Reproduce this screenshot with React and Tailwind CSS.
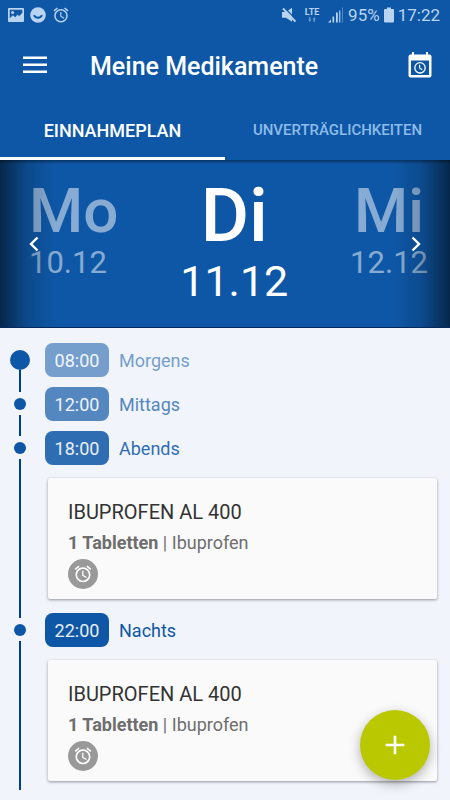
import React, { useState } from 'react';
import { MdAlarm, MdAdd } from 'react-icons/md';
import clsx from 'clsx';

const TABS = ['Einnahmeplan', 'Unverträglichkeiten'];

const IBUPROFEN = {
  name: 'IBUPROFEN AL 400',
  amount: '1 Tabletten',
  substance: 'Ibuprofen'
};

const SCHEDULE = [
  { time: '08:00', label: 'Morgens', badge: 'bg-[#759ecc]', text: 'text-[#759ecc]', meds: [] },
  { time: '12:00', label: 'Mittags', badge: 'bg-[#5487c0]', text: 'text-[#5487c0]', meds: [] },
  { time: '18:00', label: 'Abends', badge: 'bg-[#2f6db3]', text: 'text-[#2f6db3]', meds: [IBUPROFEN] },
  { time: '22:00', label: 'Nachts', badge: 'bg-[#0e56a6]', text: 'text-[#0e56a6]', meds: [IBUPROFEN] }
];

const PictureIcon = () => (
  <svg viewBox="0 0 16 14" className="w-4 h-3.5" fill="currentColor">
    <path
      fillRule="evenodd"
      d="M1 0h14a1 1 0 0 1 1 1v12a1 1 0 0 1-1 1H1a1 1 0 0 1-1-1V1a1 1 0 0 1 1-1zm.7 1.7v8.6l3.2-3 2.4 1.9 2.2-2.6 1.6 1.6 3.2-3.4V1.7z"
    />
    <circle cx="4.6" cy="4.6" r="1.5" />
  </svg>
);

const SmileIcon = () => (
  <svg viewBox="0 0 16 16" className="w-4 h-4">
    <circle cx="8" cy="8" r="7.8" fill="currentColor" />
    <path d="M4 8.2a4.2 3.6 0 0 0 8 0" fill="none" stroke="#0e57a6" strokeWidth="1.9" />
  </svg>
);

const MuteIcon = () => (
  <svg viewBox="0 0 14 15" className="w-3.5 h-4" fill="currentColor">
    <path d="M0 4.6h4L10 .3v14L4 10.2H0z" />
    <path d="M2.6.2l12 12.6" stroke="#0e57a6" strokeWidth="1.3" />
    <path d="M1 1l12.4 13" stroke="currentColor" strokeWidth="1.9" />
  </svg>
);

const SignalIcon = () => (
  <svg viewBox="0 0 16 15" className="w-4 h-4" fill="currentColor">
    <path d="M0 15l3-3v3z" />
    <rect x="4.5" y="9" width="1.6" height="6" />
    <rect x="8" y="5" width="1.8" height="10" />
    <rect x="11" y="3" width="1.4" height="12" opacity=".8" />
    <rect x="14" y="0" width="1" height="15" opacity=".4" />
  </svg>
);

const BatteryIcon = () => (
  <svg viewBox="0 0 10 15" className="w-2.5 h-4" fill="currentColor">
    <path d="M3 0h4v1.5h2a1 1 0 0 1 1 1V14a1 1 0 0 1-1 1H1a1 1 0 0 1-1-1V2.5a1 1 0 0 1 1-1h2z" />
  </svg>
);

const MenuIcon = () => (
  <svg viewBox="0 0 24 18" className="w-6 h-[18px]" fill="currentColor">
    <path d="M0 .5h24V3H0zM0 7.5h24V10H0zM0 14.5h24V17H0z" />
  </svg>
);

const CalendarClockIcon = () => (
  <svg viewBox="0 0 24 26" className="w-6 h-[26px]">
    <path
      fill="currentColor"
      fillRule="evenodd"
      d="M4 0h2v2.5h12V0h2v2.5h1.5A2 2 0 0 1 23.5 4.5v19a2 2 0 0 1-2 2h-19a2 2 0 0 1-2-2v-19a2 2 0 0 1 2-2H4zM3 8.5v14.5h18V8.5z"
    />
    <circle cx="12" cy="15.8" r="5.2" fill="none" stroke="currentColor" strokeWidth="1.3" />
    <path d="M11.6 12.8v3.2l2.6 1.8" fill="none" stroke="currentColor" strokeWidth="1.2" />
  </svg>
);

const StatusBar = () => (
  <div className="flex items-center justify-between h-[30px] pl-2 pr-2.5 text-[#b9d4f1]">
    <div className="flex items-center gap-1.5">
      <PictureIcon />
      <SmileIcon />
      <MdAlarm className="w-[18px] h-[18px]" />
    </div>
    <div className="flex items-center gap-1">
      <MuteIcon />
      <div className="flex flex-col items-center w-6">
        <span className="text-[9px] leading-[9px] font-bold">LTE</span>
        <svg viewBox="0 0 8 5" className="w-2 h-[5px] opacity-50" fill="currentColor">
          <path d="M0 2.5h1V0h1.5v2.5h1L1.8 5zM4.5 2.5L6.2 0 8 2.5H7V5H5.5V2.5z" />
        </svg>
      </div>
      <SignalIcon />
      <span className="text-[17px] leading-5">95%</span>
      <BatteryIcon />
      <span className="text-[17px] leading-5">17:22</span>
    </div>
  </div>
);

const DayColumn = ({ day, date, active = false }) => (
  <div
    className={clsx(
      'flex flex-col items-center',
      active ? 'text-white' : 'text-white/50 first:items-start'
    )}
  >
    <span className={clsx('font-medium', active ? 'text-[74px] leading-[76px]' : 'text-[62px] leading-[66px]')}>
      {day}
    </span>
    <span className={active ? 'text-[43px] leading-[54px]' : 'text-[31px] leading-[38px]'}>{date}</span>
  </div>
);

const DayPicker = () => (
  <section className="relative h-[168px] bg-[#0e57a6] border-b border-[#062a5e]">
    <div className="flex items-start justify-between pt-[18px] pl-[29px] pr-[22px]">
      <DayColumn day="Mo" date="10.12" />
      <DayColumn day="Di" date="11.12" active />
      <DayColumn day="Mi" date="12.12" />
    </div>

    {/* Edge shading */}
    <div className="absolute inset-y-0 left-0 w-14 bg-linear-to-r from-black/55 via-black/15 to-transparent" />
    <div className="absolute inset-y-0 right-0 w-14 bg-linear-to-l from-black/55 via-black/15 to-transparent" />
    <div className="absolute inset-x-0 top-0 h-1 bg-linear-to-b from-black/40 to-transparent" />

    <button aria-label="Vorheriger Tag" className="absolute inset-y-0 left-6 w-5 flex items-center justify-center text-white">
      <svg viewBox="0 0 10 16" className="w-2.5 h-4" fill="none" stroke="currentColor" strokeWidth="2.4">
        <path d="M8.5 1.5L2 8l6.5 6.5" />
      </svg>
    </button>
    <button aria-label="Nächster Tag" className="absolute inset-y-0 right-6 w-5 flex items-center justify-center text-white">
      <svg viewBox="0 0 10 16" className="w-2.5 h-4" fill="none" stroke="currentColor" strokeWidth="2.4">
        <path d="M1.5 1.5L8 8l-6.5 6.5" />
      </svg>
    </button>
  </section>
);

const Rail = ({ first }) => (
  <div className="w-10 shrink-0 flex flex-col items-center">
    {first ? (
      <span className="w-5 h-5 mt-3 rounded-full bg-[#0e56a6]" />
    ) : (
      <>
        <span className="w-0.5 h-2.5 bg-[#003f88]" />
        <span className="w-3 h-3 mt-1.5 mb-[5px] rounded-full bg-[#0e56a6]" />
      </>
    )}
    <span className="w-0.5 flex-1 bg-[#003f88]" />
  </div>
);

const MedicationCard = ({ med }) => (
  <article className="mt-2 mb-[9px] ml-[3px] px-5 pt-[22px] pb-2.5 rounded-xs bg-[#fafafa] shadow-[0_1px_3px_rgba(0,0,0,0.4)]">
    <h3 className="text-[20px] leading-6 text-[#333]">{med.name}</h3>
    <p className="mt-2 text-[18px] leading-[22px] text-[#6e6e6e]">
      <b className="font-bold">{med.amount}</b> | {med.substance}
    </p>
    <div className="mt-[5px] w-[30px] h-[30px] rounded-full bg-[#999] text-white flex items-center justify-center">
      <MdAlarm className="w-5 h-5" />
    </div>
  </article>
);

const App = () => {
  const [activeTab, setActiveTab] = useState(0);

  return (
    <div className="min-h-screen bg-[#f1f5fb] font-['Roboto',sans-serif]">
      <header className="bg-[#0e57a6] text-white">
        <StatusBar />
        <div className="flex items-center h-[70px] pl-[23px] pr-[18px]">
          <button aria-label="Menü">
            <MenuIcon />
          </button>
          <h1 className="flex-1 ml-[43px] pt-1 text-[25px] leading-8 font-medium">Meine Medikamente</h1>
          <button aria-label="Kalender">
            <CalendarClockIcon />
          </button>
        </div>
        <div role="tablist" className="grid grid-cols-2 h-[60px]">
          {TABS.map((tab, i) => (
            <button
              key={tab}
              role="tab"
              aria-selected={activeTab === i}
              onClick={() => setActiveTab(i)}
              className={clsx(
                'pt-1 border-b-3 font-medium uppercase',
                activeTab === i
                  ? 'border-white text-white text-[18px]'
                  : 'border-transparent text-[#8dbce9] text-[15px]'
              )}
            >
              {tab}
            </button>
          ))}
        </div>
      </header>

      <DayPicker />

      <main className="pt-2.5 pr-[13px]">
        {SCHEDULE.map((slot, i) => (
          <section key={slot.time} className="flex">
            <Rail first={i === 0} />
            <div className="flex-1 ml-[5px]">
              <div className="flex items-center h-11">
                <span
                  className={clsx(
                    'w-16 h-[34px] rounded-lg flex items-center justify-center text-[18px] text-white/90',
                    slot.badge
                  )}
                >
                  {slot.time}
                </span>
                <h2 className={clsx('ml-2.5 text-[18px]', slot.text)}>{slot.label}</h2>
              </div>
              {slot.meds.map((med) => (
                <MedicationCard key={med.name} med={med} />
              ))}
            </div>
          </section>
        ))}
      </main>

      <button
        aria-label="Medikament hinzufügen"
        className="fixed right-5 bottom-5 w-[70px] h-[70px] rounded-full bg-[#b9c800] text-white flex items-center justify-center shadow-[0_4px_12px_rgba(0,0,0,0.3)]"
      >
        <MdAdd className="w-8 h-8" />
      </button>
    </div>
  );
};

export default App;
